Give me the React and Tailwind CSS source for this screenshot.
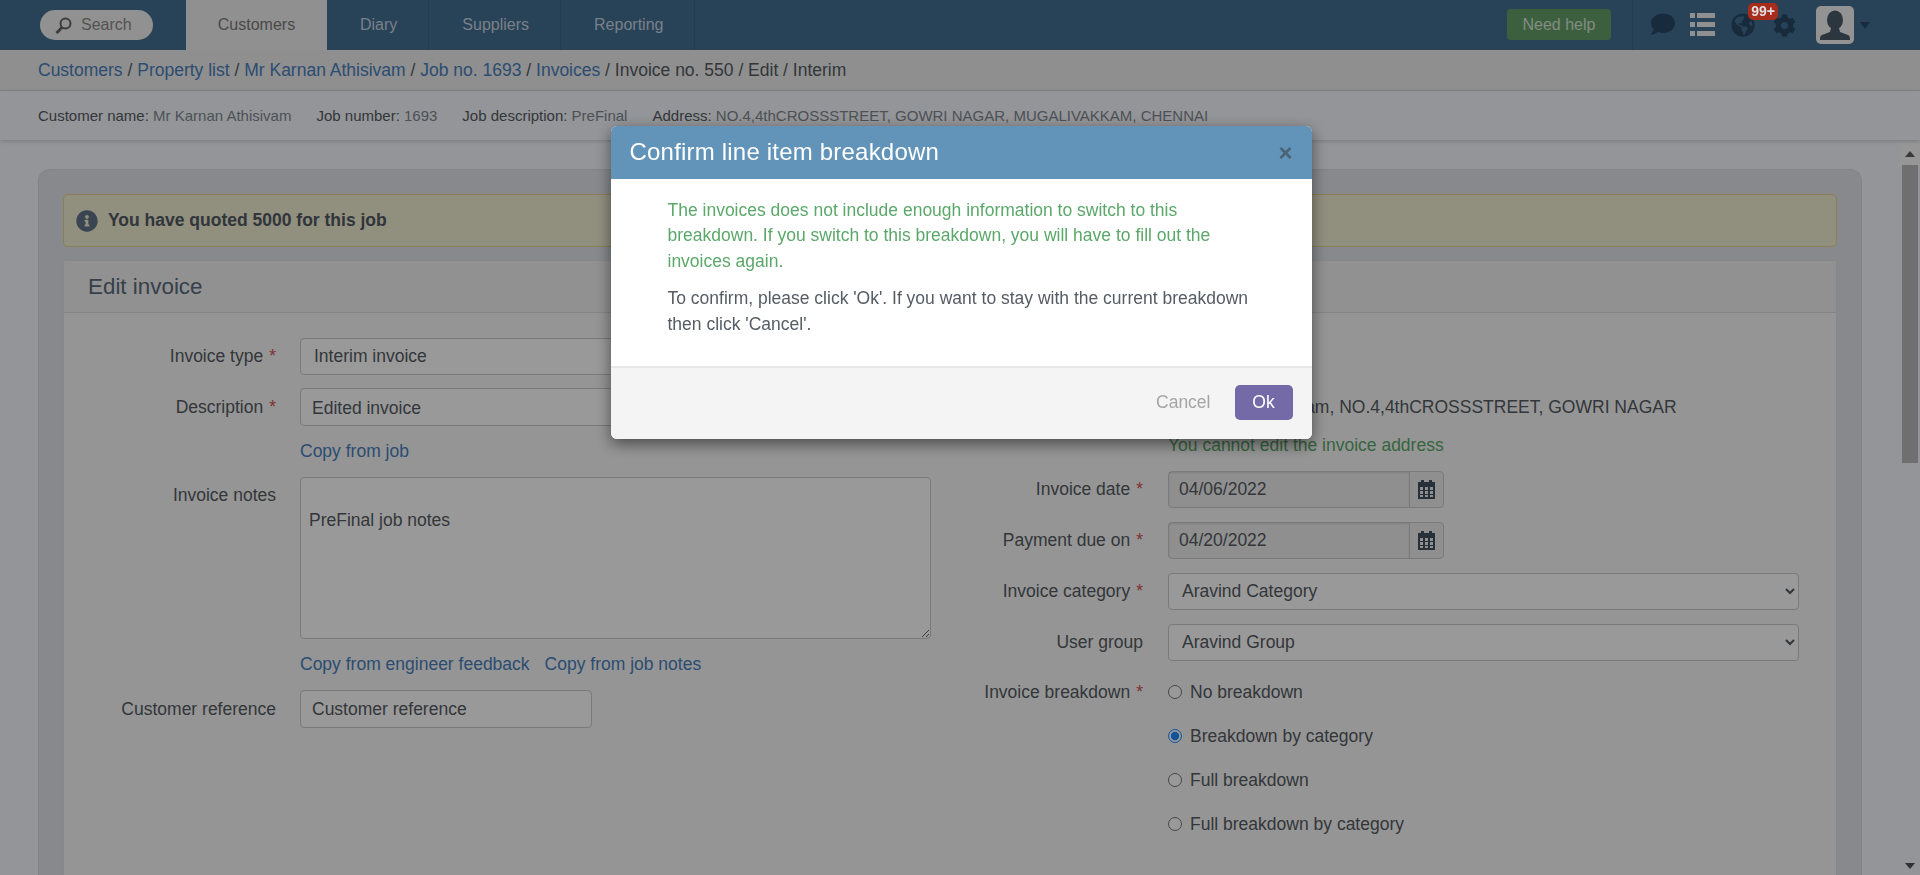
import React from 'react';
import { FaComment, FaGlobeAmericas, FaCog, FaInfoCircle } from 'react-icons/fa';

function Calendar() {
    return (
        <svg width="17" height="19" viewBox="0 0 17 19" fill="#44525f">
            <path d="M3 0h3v2h5V0h3v2h3v17H0V2h3z" />
            <g fill="#eeeeee">
                <rect x="2" y="7" width="3" height="3" />
                <rect x="7" y="7" width="3" height="3" />
                <rect x="12" y="7" width="3" height="3" />
                <rect x="2" y="11" width="3" height="3" />
                <rect x="7" y="11" width="3" height="3" />
                <rect x="12" y="11" width="3" height="3" />
                <rect x="2" y="15" width="3" height="2" />
                <rect x="7" y="15" width="3" height="2" />
                <rect x="12" y="15" width="3" height="2" />
            </g>
        </svg>
    );
}

function Label({ text, required, className = '' }) {
    return (
        <div className={`text-right shrink-0 ${className}`}>
            {text}
            {required && <span className="text-[#d9534f] ml-[6px]">*</span>}
        </div>
    );
}

function DateField({ label, value }) {
    return (
        <div className="flex items-center h-[38px] mb-[13px]">
            <Label text={label} required className="w-[199px]" />
            <div className="ml-[25px] w-[276px] h-[37px] flex border border-[#cccccc] rounded bg-[#eeeeee]">
                <div className="flex-1 px-[10px] leading-[35px] shadow-[inset_0_1px_2px_rgba(0,0,0,0.1)]">{value}</div>
                <div className="w-[34px] border-l border-[#cccccc] flex items-center justify-center">
                    <Calendar />
                </div>
            </div>
        </div>
    );
}

function SelectField({ label, required, value }) {
    return (
        <div className="flex items-center h-[38px] mb-[13px]">
            <Label text={label} required={required} className="w-[199px]" />
            <select defaultValue={value} className="ml-[25px] w-[631px] h-[37px] border border-[#cccccc] rounded bg-white px-[9px]">
                <option>{value}</option>
            </select>
        </div>
    );
}

function Radio({ text, checked }) {
    return (
        <label className="flex items-center h-[44px] gap-[8px]">
            <input type="radio" name="breakdown" defaultChecked={checked} className="w-[14px] h-[14px] accent-[#1a8cff]" />
            <span>{text}</span>
        </label>
    );
}

function App() {
    return (
        <div className="h-screen overflow-hidden flex flex-col bg-[#f7f8fd] text-[17.5px] text-[#555c63] font-['Liberation_Sans',Arial,sans-serif]">
            <header className="h-[50px] shrink-0 flex bg-[#436f92] text-[16px]">
                <div className="w-[186px] shrink-0 pl-[40px] pt-[10px]">
                    <div className="w-[113px] h-[30px] rounded-full bg-[#f2f2f2] flex items-center pl-[15px] text-[#8a8a8a] gap-[9px]">
                        <svg width="17" height="17" viewBox="0 0 17 17" fill="none" stroke="#666" strokeWidth="2">
                            <circle cx="10.5" cy="6.5" r="5" />
                            <path d="M7 10.5 1.5 16" strokeWidth="3" />
                        </svg>
                        Search
                    </div>
                </div>
                <div className="w-[141px] flex items-center justify-center bg-[#f0f0f0] text-[#7a7a7a]">Customers</div>
                {['Diary', 'Suppliers', 'Reporting'].map((tab) => (
                    <div key={tab} className="pl-[33px] pr-[31px] flex items-center border-r border-[#3c6585] text-[#c9d6e2]">{tab}</div>
                ))}
                <div className="ml-auto mt-[9px] w-[104px] h-[31px] rounded bg-[#649f68] text-[#d8e8da] flex items-center justify-center">Need help</div>
                <div className="ml-[21px] pl-[18px] border-l border-[#3c6585] flex items-center">
                    <FaComment className="w-[24px] h-[24px] text-[#274866] -mt-[2px]" />
                    <svg className="ml-[15px]" width="25" height="24" viewBox="0 0 25 24" fill="#f0f0f0">
                        <rect y="0" width="5" height="5" />
                        <rect x="7" y="0" width="18" height="5" />
                        <rect y="9" width="5" height="5" />
                        <rect x="7" y="9" width="18" height="5" />
                        <rect y="18" width="5" height="5" />
                        <rect x="7" y="18" width="18" height="5" />
                    </svg>
                    <div className="relative ml-[16px]">
                        <FaGlobeAmericas className="w-[24px] h-[24px] text-[#274866]" />
                    </div>
                    <span className="absolute z-50 left-[1748px] top-[3px] w-[30px] h-[17px] rounded-[5px] bg-[#a82c1c] text-[#e0e0e0] text-[14px] font-bold leading-[17px] text-center">99+</span>
                    <FaCog className="ml-[18px] w-[23px] h-[23px] text-[#274866]" />
                    <div className="ml-[20px] w-[38px] h-[38px] rounded-[5px] bg-[#f5f5f5] overflow-hidden">
                        <svg width="38" height="38" viewBox="0 0 38 38" fill="#4a5a68">
                            <ellipse cx="19" cy="14" rx="8" ry="9.5" />
                            <path d="M15 22h8l1 4 8 3c1.500.6 2 2 2 5H4c0-3 .5-4.400 2-5l8-3z" />
                        </svg>
                    </div>
                    <div className="ml-[6px] mr-[50px] w-0 h-0 border-x-[5.500px] border-x-transparent border-t-[7px] border-t-[#274866]" />
                </div>
            </header>

            <div className="h-[41px] shrink-0 border-b border-[#d9dbe2] bg-[#eeeeee] pl-[38px] leading-[41px]">
                <a className="text-[#4a80bd]">Customers</a> / <a className="text-[#4a80bd]">Property list</a> / <a className="text-[#4a80bd]">Mr Karnan Athisivam</a> / <a className="text-[#4a80bd]">Job no. 1693</a> / <a className="text-[#4a80bd]">Invoices</a> / Invoice no. 550 / Edit / Interim
            </div>

            <div className="h-[49px] shrink-0 bg-[#f7f8fd] shadow-[0_1px_4px_rgba(0,0,0,0.2)] pl-[38px] pt-[1px] flex items-center gap-[25px] text-[15px] relative">
                <div>Customer name: <span className="text-[#808890]">Mr Karnan Athisivam</span></div>
                <div>Job number: <span className="text-[#808890]">1693</span></div>
                <div>Job description: <span className="text-[#808890]">PreFinal</span></div>
                <div>Address: <span className="text-[#808890]">NO.4,4thCROSSSTREET, GOWRI NAGAR, MUGALIVAKKAM, CHENNAI</span></div>
            </div>

            <main className="flex-1 min-h-0 flex">
                <div className="flex-1 min-w-0 pl-[38px] pr-[37px] pt-[29px]">
                    <div className="h-full rounded-t-[12px] border-t border-x border-[#d8dae0] bg-[#e3e5ec] px-[24px] pt-[24px]">
                        <div className="h-[53px] mb-[13px] rounded-[5px] border border-[#e6d48f] bg-[#f2eed3] flex items-center pl-[12px] gap-[10px] font-bold text-[#505a64]">
                            <FaInfoCircle className="w-[22px] h-[22px] text-[#5f7488]" />
                            You have quoted 5000 for this job
                        </div>
                        <div className="h-[700px] rounded-t-[5px] border border-[#e2e2e2] bg-[#f8f8f8]">
                            <div className="h-[52px] bg-[#f2f2f2] border-b border-[#dddddd] pl-[24px] text-[22.4px] leading-[52px] text-[#5a6b7c]">Edit invoice</div>
                            <div className="flex pt-[24px]">
                                <div className="w-[880px] shrink-0">
                                    <div className="flex items-center h-[38px] mb-[13px]">
                                        <Label text="Invoice type" required className="w-[212px]" />
                                        <select defaultValue="Interim invoice" className="ml-[24px] w-[631px] h-[37px] border border-[#cccccc] rounded bg-white px-[9px]">
                                            <option>Interim invoice</option>
                                        </select>
                                    </div>
                                    <div className="flex items-center h-[38px]">
                                        <Label text="Description" required className="w-[212px]" />
                                        <input readOnly value="Edited invoice" className="ml-[24px] w-[631px] h-[38px] border border-[#cccccc] rounded bg-white px-[11px] pt-[2px]" />
                                    </div>
                                    <div className="pl-[236px] h-[51px] leading-[50px] text-[#4a80bd]">Copy from job</div>
                                    <div className="flex">
                                        <Label text="Invoice notes" className="w-[212px] pt-[5px]" />
                                        <textarea readOnly value={'\nPreFinal job notes'} className="block ml-[24px] w-[631px] h-[162px] border border-[#cccccc] rounded bg-white px-[8px] py-[5px] leading-[25px]" />
                                    </div>
                                    <div className="pl-[236px] h-[51px] leading-[51px] flex gap-[15px] text-[#4a80bd]">
                                        <span>Copy from engineer feedback</span>
                                        <span>Copy from job notes</span>
                                    </div>
                                    <div className="flex items-center h-[38px]">
                                        <Label text="Customer reference" className="w-[212px]" />
                                        <input readOnly value="Customer reference" className="ml-[24px] w-[292px] h-[38px] border border-[#cccccc] rounded bg-white px-[11px]" />
                                    </div>
                                </div>
                                <div className="flex-1 min-w-0">
                                    <div className="flex items-center h-[38px] mt-[51px]">
                                        <Label text="Invoice address" required className="w-[199px]" />
                                        <div className="ml-[25px] whitespace-nowrap">Mr Karnan Athisivam, NO.4,4thCROSSSTREET, GOWRI NAGAR</div>
                                    </div>
                                    <div className="pl-[224px] h-[44px] leading-[38px] text-[#5ba86a]">You cannot edit the invoice address</div>
                                    <DateField label="Invoice date" value="04/06/2022" />
                                    <DateField label="Payment due on" value="04/20/2022" />
                                    <SelectField label="Invoice category" required value="Aravind Category" />
                                    <SelectField label="User group" value="Aravind Group" />
                                    <div className="flex -mt-[4px]">
                                        <Label text="Invoice breakdown" required className="w-[199px] pt-[9px]" />
                                        <div className="ml-[25px]">
                                            <Radio text="No breakdown" />
                                            <Radio text="Breakdown by category" checked />
                                            <Radio text="Full breakdown" />
                                            <Radio text="Full breakdown by category" />
                                        </div>
                                    </div>
                                </div>
                            </div>
                        </div>
                    </div>
                </div>
                <div className="w-[21px] shrink-0 mt-[3px] bg-[#f7f8fd] flex flex-col items-center">
                    <div className="h-[22px] w-full bg-[#fafafa] flex items-center justify-center">
                        <div className="w-0 h-0 border-x-[5px] border-x-transparent border-b-[6px] border-b-[#606060]" />
                    </div>
                    <div className="h-[298px] w-[16px] bg-[#b9b9b9]" />
                    <div className="mt-auto mb-[6px] w-0 h-0 border-x-[5px] border-x-transparent border-t-[6px] border-t-[#505050]" />
                </div>
            </main>

            <div className="fixed inset-0 z-40 bg-black/40 flex justify-center pl-[2px] pt-[126px]">
                <div className="w-[701px] h-[313px] rounded-[6px] bg-white shadow-[0_5px_15px_rgba(0,0,0,0.5)] overflow-hidden flex flex-col">
                    <div className="h-[53px] shrink-0 bg-[#6194b8] flex items-center justify-between pl-[19px] pr-[19px]">
                        <div className="text-[24px] text-white tracking-[0.2px] -mt-[1px]">Confirm line item breakdown</div>
                        <div className="text-[24px] font-bold text-[#4a6378]">×</div>
                    </div>
                    <div className="flex-1 pl-[57px] pr-[56px] pt-[19px] leading-[25.4px]">
                        <p className="text-[#5ba86a] mb-[12px]">The invoices does not include enough information to switch to this breakdown. If you switch to this breakdown, you will have to fill out the invoices again.</p>
                        <p>To confirm, please click 'Ok'. If you want to stay with the current breakdown then click 'Cancel'.</p>
                    </div>
                    <div className="h-[73px] shrink-0 border-t-2 border-[#e8e8e8] bg-[#f4f4f4] flex justify-end items-start pt-[17px] pr-[19px]">
                        <div className="h-[35px] leading-[35px] text-[#a5a5a5] mr-[24px]">Cancel</div>
                        <div className="w-[58px] h-[35px] rounded-[5px] bg-[#756aa8] text-white leading-[35px] text-center">Ok</div>
                    </div>
                </div>
            </div>
        </div>
    );
}

export default App;
